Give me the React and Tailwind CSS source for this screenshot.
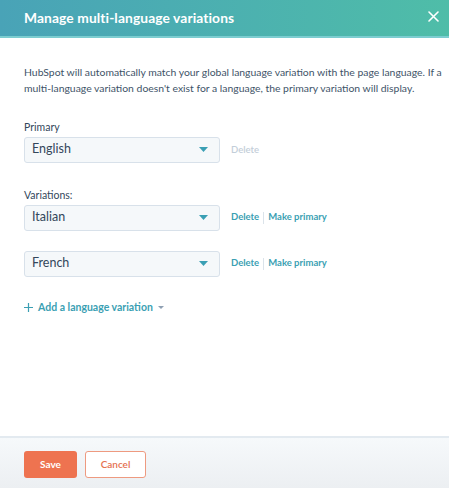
import React from 'react';

const Caret = () => (
  <svg width="9" height="5" viewBox="0 0 9 5" className="fill-[#3a9fb4]">
    <path d="M0 0h9L4.5 5z" />
  </svg>
);

const LangSelect = ({ value }) => (
  <div className="flex items-center justify-between w-[196px] h-[26px] pl-[7px] pr-[11px] rounded-[3px] border border-[#d8e1ea] bg-[#f5f8fa] text-[12.5px] text-[#33475b]">
    <span>{value}</span>
    <Caret />
  </div>
);

const Row = ({ value, primary }) => (
  <div className="flex items-center">
    <LangSelect value={value} />
    {primary ? (
      <span className="ml-[11px] text-[9.5px] font-semibold text-[#c3ced9]">Delete</span>
    ) : (
      <div className="ml-[11px] flex items-center text-[9.5px] font-bold text-[#3b9fb3]">
        <span>Delete</span>
        <span className="mx-[4px] h-[12px] w-px bg-[#dbe3ea]" />
        <span>Make primary</span>
      </div>
    )}
  </div>
);

export default function App() {
  return (
    <div className="w-[449px] h-[488px] flex flex-col bg-white font-['Lato','Noto_Sans',sans-serif] text-[#33475b] overflow-hidden">
      <div className="h-[38px] shrink-0 flex items-center justify-between pl-[24px] pr-[10px] bg-gradient-to-r from-[#49a3b7] to-[#4fbda8] border-b-2 border-[#7ccdd0]">
        <h1 className="text-[13.8px] font-bold text-white tracking-[0.1px]">Manage multi-language variations</h1>
        <svg width="11" height="11" viewBox="0 0 11 11" className="stroke-white mb-[4px]" strokeWidth="1.6" strokeLinecap="round">
          <path d="M1 1l9 9M10 1l-9 9" />
        </svg>
      </div>

      <div className="flex-1 pl-[24px] pr-[2px] pt-[26px]">
        <p className="text-[10.4px] leading-[16px] text-[#3e5368]">
          HubSpot will automatically match your global language variation with the page language. If a multi-language variation doesn't exist for a language, the primary variation will display.
        </p>

        <div className="mt-[24px] text-[10.5px] text-[#33475b]">Primary</div>
        <div className="mt-[1px]"><Row value="English" primary /></div>

        <div className="mt-[25px] text-[10.5px] text-[#33475b]">Variations:</div>
        <div className="mt-[1px]"><Row value="Italian" /></div>
        <div className="mt-[20px]"><Row value="French" /></div>

        <div className="mt-[23px] flex items-center text-[10.5px] font-bold text-[#3b9fb3]">
          <svg width="9" height="9" viewBox="0 0 9 9" className="stroke-[#3b9fb3] mr-[5px]" strokeWidth="1.2">
            <path d="M4.5 0v9M0 4.5h9" />
          </svg>
          <span>Add a language variation</span>
          <svg width="6" height="3" viewBox="0 0 6 3" className="fill-[#8fa0b3] ml-[5px]">
            <path d="M0 0h6L3 3z" />
          </svg>
        </div>
      </div>

      <div className="h-[52px] shrink-0 flex items-start gap-[8px] px-[24px] pt-[13px] border-t-2 border-[#e3eaf0] bg-gradient-to-b from-[#f6f9fb] to-[#eceff2]">
        <button className="w-[53px] h-[27px] rounded-[3px] bg-[#ee7350] text-white text-[10px] font-bold">Save</button>
        <button className="w-[61px] h-[27px] rounded-[3px] bg-white border border-[#ee9a80] text-[#e5714f] text-[10px] font-semibold">Cancel</button>
      </div>
    </div>
  );
}
